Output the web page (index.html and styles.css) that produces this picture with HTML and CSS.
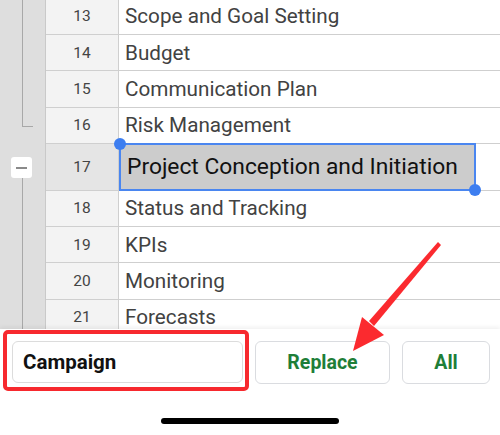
FILE: index.html
```
<!DOCTYPE html>
<html>
<head>
<meta charset="utf-8">
<link rel="stylesheet" href="styles.css">
</head>
<body>
<div class="screen">
  <div class="sheet">
    <div class="gutter">
      <div class="bracket-top"></div>
      <div class="minus"><span></span></div>
      <div class="bracket-bottom"></div>
    </div>
    <div class="grid">
      <div class="row first"><div class="num">13</div><div class="cell">Scope and Goal Setting</div></div>
      <div class="row"><div class="num">14</div><div class="cell">Budget</div></div>
      <div class="row"><div class="num">15</div><div class="cell">Communication Plan</div></div>
      <div class="row"><div class="num">16</div><div class="cell">Risk Management</div></div>
      <div class="row selected"><div class="num">17</div><div class="cell"><div class="sel">Project Conception and Initiation<i class="h h1"></i><i class="h h2"></i></div></div></div>
      <div class="row"><div class="num">18</div><div class="cell">Status and Tracking</div></div>
      <div class="row"><div class="num">19</div><div class="cell">KPIs</div></div>
      <div class="row"><div class="num">20</div><div class="cell">Monitoring</div></div>
      <div class="row"><div class="num">21</div><div class="cell">Forecasts</div></div>
    </div>
  </div>
  <div class="panel">
    <div class="controls">
      <div class="redbox"><div class="input">Campaign</div></div>
      <div class="btn replace">Replace</div>
      <div class="btn all">All</div>
    </div>
    <div class="home"></div>
  </div>
  <svg class="arrow" width="500" height="435" viewBox="0 0 500 435">
    <polygon points="438,242 441,245 374,326 369,321" fill="#fb2a2f"/>
    <polygon points="353,351 362,317 384,335" fill="#fb2a2f"/>
  </svg>
</div>
</body>
</html>
```
FILE: styles.css
```
* { box-sizing: border-box; }
html, body { margin: 0; padding: 0; }
body { width: 500px; height: 435px; overflow: hidden; background: #fff; font-family: Roboto, "Liberation Sans", sans-serif; }
.screen { position: relative; width: 500px; height: 435px; overflow: hidden; }
.sheet { display: flex; height: 330px; overflow: hidden; }
.gutter { position: relative; width: 46px; flex: none; background: #dedede; border-right: 1px solid #c9c9c9; }
.bracket-top { position: absolute; left: 22px; top: 0; width: 11px; height: 127px; border-left: 1px solid #a8a8a8; border-bottom: 1px solid #a8a8a8; }
.minus { position: absolute; left: 11px; top: 157px; width: 21px; height: 21px; background: #fff; border-radius: 3px; display: flex; align-items: center; justify-content: center; }
.minus span { width: 11px; height: 2px; background: #8a8a8a; }
.bracket-bottom { position: absolute; left: 22px; top: 178px; height: 160px; border-left: 1px solid #a8a8a8; }
.grid { flex: 1; display: flex; flex-direction: column; margin-top: -1.4px; }
.row { display: flex; height: 36.4px; flex: none; border-bottom: 1px solid #cfcfcf; }
.num { width: 73px; flex: none; background: #f3f3f3; border-right: 1px solid #cfcfcf; display: flex; align-items: center; justify-content: center; font-size: 15.5px; color: #444; }
.cell { flex: 1; display: flex; align-items: center; padding-left: 6px; font-size: 20.7px; color: #424242; }
.row.selected { height: 46.4px; }
.row.selected .num { background: #e5e5e5; }
.row.selected .cell { padding-left: 0; align-items: stretch; }
.sel { position: relative; width: 357px; margin: -1px 0 -1px 0; background: #cccccc; border: 2px solid #4a86f0; display: flex; align-items: center; padding-left: 6px; font-size: 22.8px; color: #111; }
.h { position: absolute; width: 12px; height: 12px; border-radius: 50%; background: #3d7ef0; }
.h1 { left: -7px; top: -7px; }
.h2 { right: -7px; bottom: -7px; }
.panel { position: absolute; left: 0; top: 329px; width: 500px; height: 106px; background: #fff; box-shadow: 0 -2px 4px rgba(0,0,0,0.06); }
.controls { display: flex; align-items: flex-start; padding: 1px 0 0 3px; }
.redbox { width: 246px; height: 61px; border: 4px solid #f7292e; border-radius: 5px; padding: 7px 2px 0 5px; }
.input { height: 42px; border: 1px solid #dcdcdc; border-radius: 6px; display: flex; align-items: center; padding-left: 10px; font-size: 20.5px; font-weight: 700; color: #111; }
.btn { height: 43px; margin-top: 11px; border: 1px solid #dadce0; border-radius: 6px; display: flex; align-items: center; justify-content: center; font-size: 19.5px; font-weight: 700; color: #1e7e38; }
.replace { width: 135px; margin-left: 6px; }
.all { width: 88px; margin-left: 12px; }
.home { position: absolute; left: 161px; top: 89px; width: 178px; height: 6px; border-radius: 3px; background: #000; }
.arrow { position: absolute; left: 0; top: 0; }
```
